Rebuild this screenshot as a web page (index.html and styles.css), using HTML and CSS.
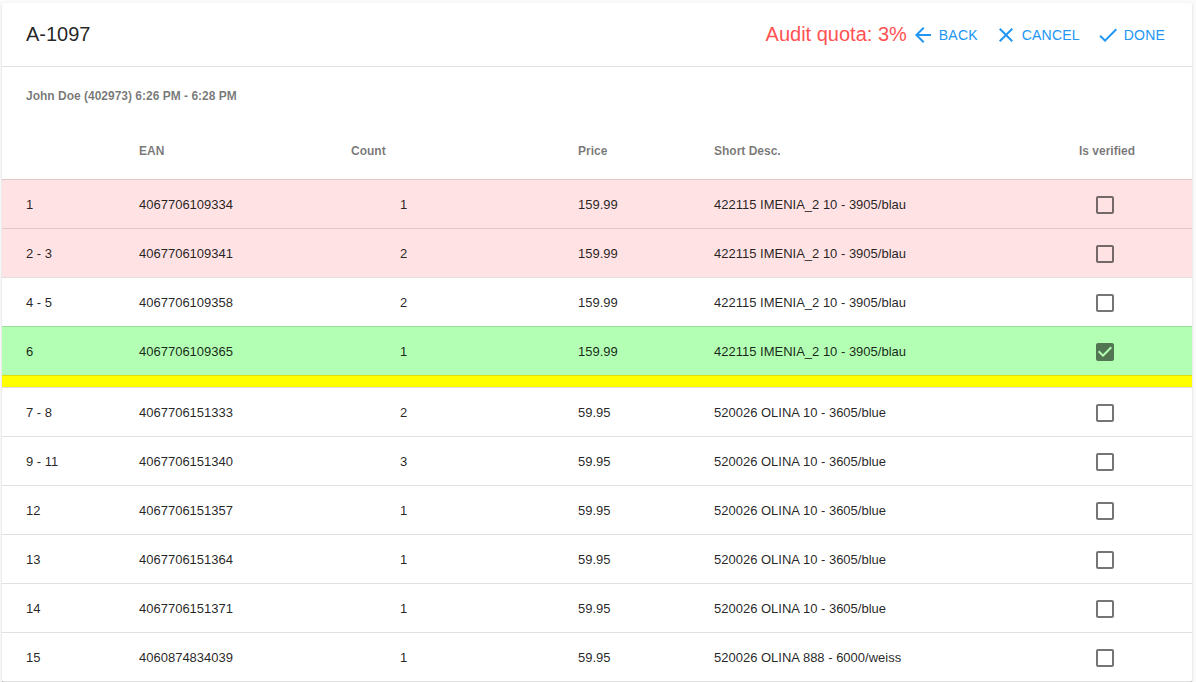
FILE: index.html
```html
<!DOCTYPE html>
<html lang="en">
<head>
<meta charset="utf-8">
<title>A-1097</title>
<link rel="stylesheet" href="styles.css">
</head>
<body>
<div class="card">
  <header class="toolbar">
    <div class="title">A-1097</div>
    <div class="spacer"></div>
    <div class="quota">Audit quota: 3%</div>
    <div class="actions">
      <button class="btn">
        <svg class="ico" viewBox="0 0 24 24"><path d="M20 11H7.830l5.590-5.590L12 4l-8 8 8 8 1.410-1.410L7.830 13H20v-2z"/></svg>
        <span>Back</span>
      </button>
      <button class="btn">
        <svg class="ico" viewBox="0 0 24 24"><path d="M19 6.410L17.590 5 12 10.590 6.410 5 5 6.410 10.590 12 5 17.590 6.410 19 12 13.410 17.590 19 19 17.590 13.410 12z"/></svg>
        <span>Cancel</span>
      </button>
      <button class="btn">
        <svg class="ico" viewBox="0 0 24 24"><path d="M9 16.170L4.830 12l-1.420 1.410L9 19 21 7l-1.410-1.410z"/></svg>
        <span>Done</span>
      </button>
    </div>
  </header>
  <div class="subtitle">John Doe (402973) 6:26 PM - 6:28 PM</div>
  <table class="grid">
    <colgroup>
      <col class="c-pos"><col class="c-ean"><col class="c-count"><col class="c-price"><col class="c-desc"><col class="c-ver">
    </colgroup>
    <thead>
      <tr>
        <th></th><th>EAN</th><th>Count</th><th>Price</th><th>Short Desc.</th><th class="center">Is verified</th>
      </tr>
    </thead>
    <tbody>
      <tr class="err"><td>1</td><td>4067706109334</td><td class="num">1</td><td>159.99</td><td>422115 IMENIA_2 10 - 3905/blau</td><td class="center"><svg class="cb" viewBox="0 0 24 24"><path d="M19 5v14H5V5h14m0-2H5c-1.1 0-2 .9-2 2v14c0 1.1.9 2 2 2h14c1.1 0 2-.9 2-2V5c0-1.1-.9-2-2-2z"/></svg></td></tr>
      <tr class="err"><td>2 - 3</td><td>4067706109341</td><td class="num">2</td><td>159.99</td><td>422115 IMENIA_2 10 - 3905/blau</td><td class="center"><svg class="cb" viewBox="0 0 24 24"><path d="M19 5v14H5V5h14m0-2H5c-1.1 0-2 .9-2 2v14c0 1.1.9 2 2 2h14c1.1 0 2-.9 2-2V5c0-1.1-.9-2-2-2z"/></svg></td></tr>
      <tr><td>4 - 5</td><td>4067706109358</td><td class="num">2</td><td>159.99</td><td>422115 IMENIA_2 10 - 3905/blau</td><td class="center"><svg class="cb" viewBox="0 0 24 24"><path d="M19 5v14H5V5h14m0-2H5c-1.1 0-2 .9-2 2v14c0 1.1.9 2 2 2h14c1.1 0 2-.9 2-2V5c0-1.1-.9-2-2-2z"/></svg></td></tr>
      <tr class="ok"><td>6</td><td>4067706109365</td><td class="num">1</td><td>159.99</td><td>422115 IMENIA_2 10 - 3905/blau</td><td class="center"><svg class="cb" viewBox="0 0 24 24"><path d="M19 3H5c-1.11 0-2 .9-2 2v14c0 1.1.89 2 2 2h14c1.11 0 2-.9 2-2V5c0-1.1-.89-2-2-2zm-9 14l-5-5 1.41-1.41L10 14.17l7.59-7.59L19 8l-9 9z"/></svg></td></tr>
      <tr class="sep"><td colspan="6"></td></tr>
      <tr><td>7 - 8</td><td>4067706151333</td><td class="num">2</td><td>59.95</td><td>520026 OLINA 10 - 3605/blue</td><td class="center"><svg class="cb" viewBox="0 0 24 24"><path d="M19 5v14H5V5h14m0-2H5c-1.1 0-2 .9-2 2v14c0 1.1.9 2 2 2h14c1.1 0 2-.9 2-2V5c0-1.1-.9-2-2-2z"/></svg></td></tr>
      <tr><td>9 - 11</td><td>4067706151340</td><td class="num">3</td><td>59.95</td><td>520026 OLINA 10 - 3605/blue</td><td class="center"><svg class="cb" viewBox="0 0 24 24"><path d="M19 5v14H5V5h14m0-2H5c-1.1 0-2 .9-2 2v14c0 1.1.9 2 2 2h14c1.1 0 2-.9 2-2V5c0-1.1-.9-2-2-2z"/></svg></td></tr>
      <tr><td>12</td><td>4067706151357</td><td class="num">1</td><td>59.95</td><td>520026 OLINA 10 - 3605/blue</td><td class="center"><svg class="cb" viewBox="0 0 24 24"><path d="M19 5v14H5V5h14m0-2H5c-1.1 0-2 .9-2 2v14c0 1.1.9 2 2 2h14c1.1 0 2-.9 2-2V5c0-1.1-.9-2-2-2z"/></svg></td></tr>
      <tr><td>13</td><td>4067706151364</td><td class="num">1</td><td>59.95</td><td>520026 OLINA 10 - 3605/blue</td><td class="center"><svg class="cb" viewBox="0 0 24 24"><path d="M19 5v14H5V5h14m0-2H5c-1.1 0-2 .9-2 2v14c0 1.1.9 2 2 2h14c1.1 0 2-.9 2-2V5c0-1.1-.9-2-2-2z"/></svg></td></tr>
      <tr><td>14</td><td>4067706151371</td><td class="num">1</td><td>59.95</td><td>520026 OLINA 10 - 3605/blue</td><td class="center"><svg class="cb" viewBox="0 0 24 24"><path d="M19 5v14H5V5h14m0-2H5c-1.1 0-2 .9-2 2v14c0 1.1.9 2 2 2h14c1.1 0 2-.9 2-2V5c0-1.1-.9-2-2-2z"/></svg></td></tr>
      <tr><td>15</td><td>4060874834039</td><td class="num">1</td><td>59.95</td><td>520026 OLINA 888 - 6000/weiss</td><td class="center"><svg class="cb" viewBox="0 0 24 24"><path d="M19 5v14H5V5h14m0-2H5c-1.1 0-2 .9-2 2v14c0 1.1.9 2 2 2h14c1.1 0 2-.9 2-2V5c0-1.1-.9-2-2-2z"/></svg></td></tr>
    </tbody>
  </table>
</div>
</body>
</html>
```
FILE: styles.css
```css
* { box-sizing: border-box; }
html, body { margin: 0; }
body {
  background: #fafafa;
  padding: 3px 4px 0 2px;
  font-family: "Liberation Sans", Arial, sans-serif;
  color: rgba(0,0,0,.87);
  overflow: hidden;
}
.card {
  background: #fff;
  box-shadow: 0 2px 1px -1px rgba(0,0,0,.2), 0 1px 1px 0 rgba(0,0,0,.14), 0 1px 3px 0 rgba(0,0,0,.12);
  border-radius: 2px;
}
.toolbar {
  height: 64px;
  display: flex;
  align-items: center;
  padding: 0 27px 0 24px;
  border-bottom: 1px solid rgba(0,0,0,.12);
}
.title { font-size: 20px; color: rgba(0,0,0,.87); }
.spacer { flex: 1; }
.quota { font-size: 20px; color: #ff5252; margin-right: 4px; }
.actions { display: flex; align-items: center; gap: 16px; }
.btn {
  display: flex;
  align-items: center;
  gap: 4px;
  padding: 0;
  border: 0;
  background: none;
  font-family: inherit;
  font-size: 14px;
  color: #2196f3;
  text-transform: uppercase;
  letter-spacing: .2px;
  cursor: pointer;
}
.ico { width: 24px; height: 24px; fill: #2196f3; display: block; }
.subtitle {
  height: 57px;
  display: flex;
  align-items: center;
  padding-left: 24px;
  font-size: 12px;
  font-weight: bold;
  color: rgba(0,0,0,.54);
}
.grid { width: 100%; border-collapse: collapse; table-layout: fixed; }
.c-pos { width: 113px; }
.c-ean { width: 212px; }
.c-count { width: 227px; }
.c-price { width: 136px; }
.c-desc { width: 332px; }
.c-ver { width: 170px; }
.grid th {
  height: 55px;
  padding: 0 24px;
  text-align: left;
  font-size: 12px;
  font-weight: bold;
  color: rgba(0,0,0,.54);
  border-bottom: 1px solid rgba(0,0,0,.12);
}
.grid td {
  height: 49px;
  padding: 2px 24px 0;
  font-size: 13px;
  border-bottom: 1px solid rgba(0,0,0,.12);
  white-space: nowrap;
}
.grid td.num { padding-left: 73px; }
.grid .center { text-align: center; }
.cb { width: 24px; height: 24px; fill: rgba(0,0,0,.54); display: inline-block; vertical-align: middle; margin-right: 4px; }
.err { background: #ffe2e3; }
.ok { background: #b3ffb3; }
.sep { background: #ffff00; }
.grid .sep td { height: 12px; padding: 0; }
```
